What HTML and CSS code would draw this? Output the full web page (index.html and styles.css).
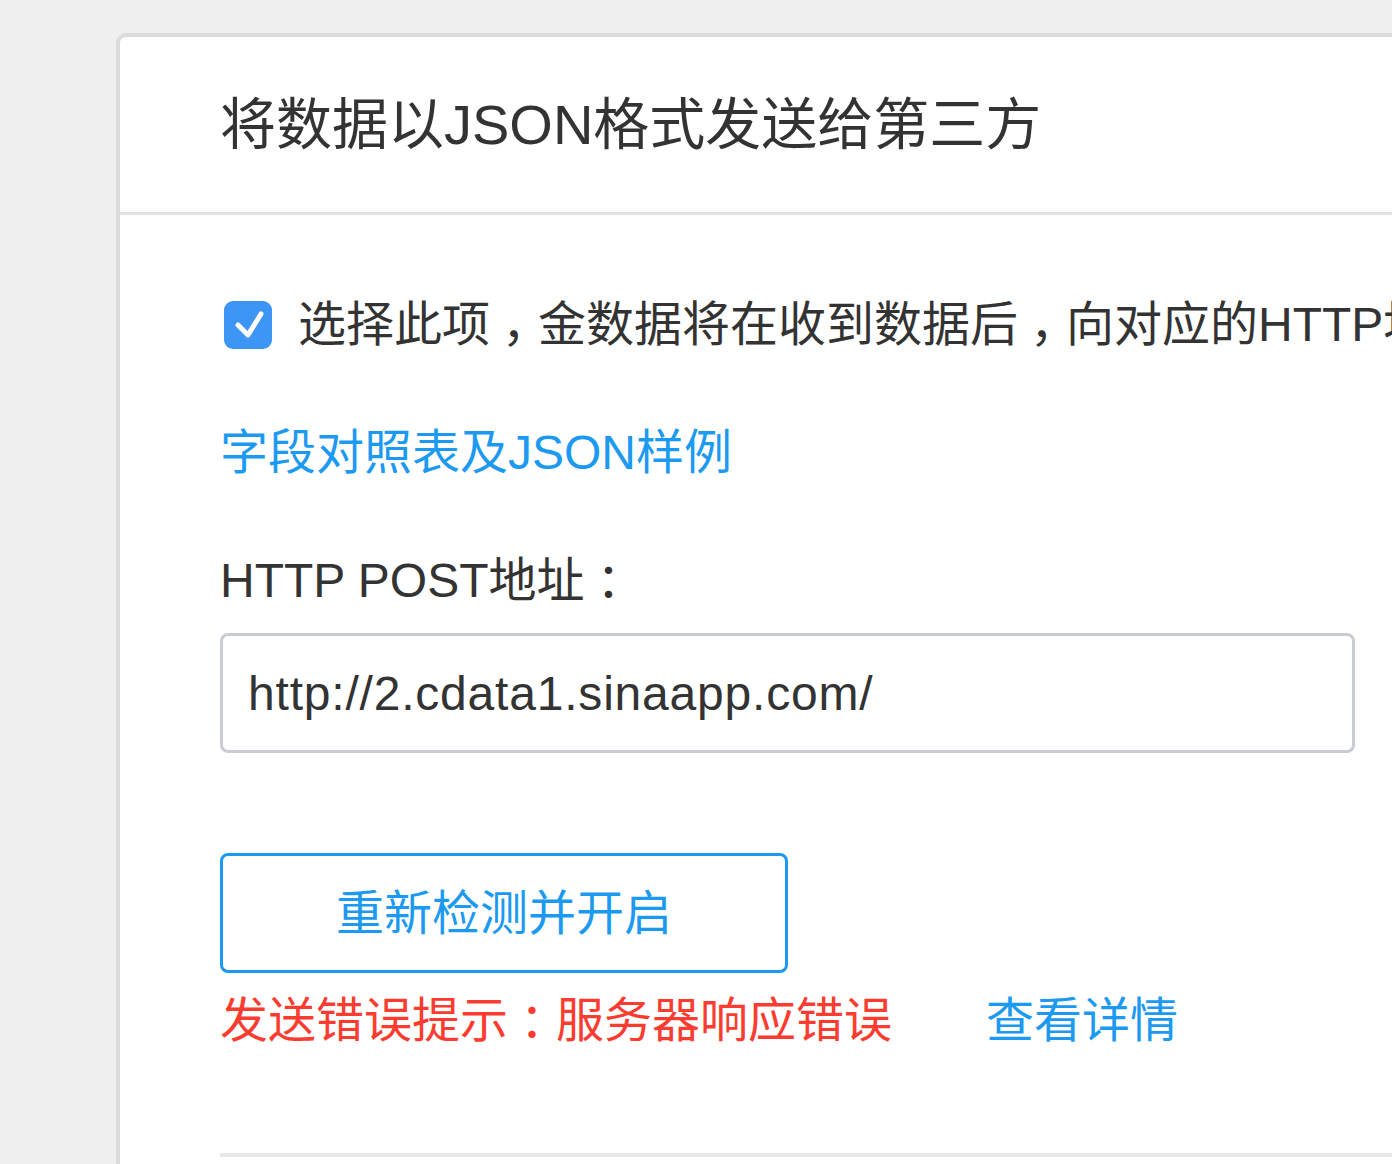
FILE: index.html
```html
<!DOCTYPE html>
<html lang="zh-CN">
<head>
<meta charset="utf-8">
<title>将数据以JSON格式发送给第三方</title>
<link rel="stylesheet" href="styles.css">
</head>
<body>
<div class="card">
  <div class="card-header">
    <h1 class="title">将数据以JSON格式发送给第三方</h1>
  </div>
  <div class="card-body">
    <div class="check-row">
      <span class="checkbox">
        <svg width="48" height="48" viewBox="0 0 48 48"><path d="M14 24 L24 34 L37 13" fill="none" stroke="#fff" stroke-width="5" stroke-linecap="round" stroke-linejoin="round"/></svg>
      </span>
      <span class="check-text">选择此项<span class="punct">，</span>金数据将在收到数据后<span class="punct">，</span>向对应的HTTP地址发送数据</span>
    </div>
    <a class="link sample-link" href="#">字段对照表及JSON样例</a>
    <div class="label">HTTP POST地址<span class="punct">：</span></div>
    <div class="input">http://2.cdata1.sinaapp.com/</div>
    <button class="btn">重新检测并开启</button>
    <div class="error-row">
      <span class="error">发送错误提示<span class="punct">：</span>服务器响应错误</span>
      <a class="link detail" href="#">查看详情</a>
    </div>
    <div class="divider"></div>
  </div>
</div>
</body>
</html>
```

FILE: styles.css
```css
html, body {
  margin: 0;
  padding: 0;
  background: #efefef;
  overflow: hidden;
  height: 1164px;
}
body {
  font-family: "Liberation Sans", "Noto Sans CJK SC", sans-serif;
  color: #333;
}
.card {
  margin-left: 116px;
  margin-top: 33px;
  width: 1400px;
  height: 1300px;
  background: #fff;
  border: 4px solid #dcdcdc;
  border-radius: 10px;
  box-sizing: border-box;
  overflow: hidden;
}
.card-header {
  height: 175px;
  display: flex;
  align-items: center;
  padding-left: 100px;
  border-bottom: 3px solid #e2e2e2;
}
.title {
  margin: 0;
  font-size: 56px;
  font-weight: normal;
  color: #333;
  line-height: 60px;
}
.card-body {
  padding-left: 100px;
  padding-top: 86px;
  display: flex;
  flex-direction: column;
  align-items: flex-start;
}
.punct {
  display: inline-block;
  width: 48px;
  box-sizing: border-box;
  padding-left: 12px;
  font-feature-settings: "halt";
  vertical-align: top;
}
.check-row {
  display: flex;
  align-items: center;
  height: 48px;
  white-space: nowrap;
}
.checkbox {
  width: 48px;
  height: 48px;
  margin-left: 4px;
  border-radius: 9px;
  background: #3d95f6;
  display: flex;
  flex: none;
}
.check-text {
  margin-left: 26px;
  font-size: 48px;
  line-height: 48px;
  color: #333;
}
.link {
  color: #1c9af1;
  text-decoration: none;
  font-size: 48px;
  line-height: 48px;
}
.sample-link {
  margin-top: 80px;
}
.label {
  margin-top: 80px;
  font-size: 48px;
  line-height: 48px;
  color: #333;
  white-space: nowrap;
}
.input {
  margin-top: 28px;
  width: 1135px;
  height: 120px;
  box-sizing: border-box;
  border: 3px solid #c9cdd3;
  border-radius: 8px;
  padding-left: 25px;
  display: flex;
  align-items: center;
  font-size: 48px;
  letter-spacing: 0.8px;
  color: #333;
}
.btn {
  margin-top: 100px;
  width: 568px;
  height: 120px;
  box-sizing: border-box;
  border: 3px solid #1c9af1;
  border-radius: 8px;
  background: #fff;
  color: #1c9af1;
  font-family: inherit;
  font-size: 48px;
  padding: 0 0 8px 0;
}
.error-row {
  margin-top: 24px;
  display: flex;
  align-items: center;
  height: 48px;
  white-space: nowrap;
}
.error {
  color: #fc3c30;
  font-size: 48px;
  line-height: 48px;
}
.detail {
  margin-left: 94px;
}
.divider {
  margin-top: 108px;
  width: 1300px;
  height: 4px;
  background: #e9e9e9;
}
```
